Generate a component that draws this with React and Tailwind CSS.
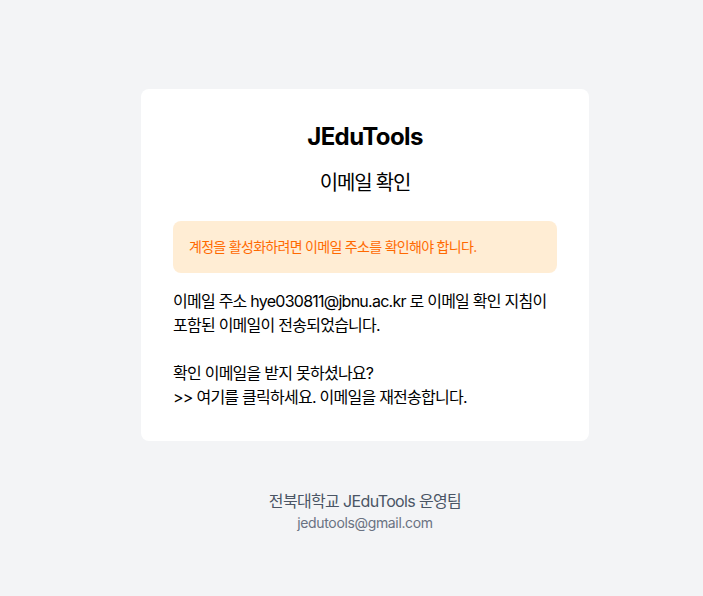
import React from "react";

function App() {
  return (
    <div
      className="min-h-screen bg-gray-100 pt-[89px] pl-[27px]"
      style={{ fontFamily: "Inter, 'Noto Sans CJK KR', sans-serif" }}
    >
      <div className="mx-auto w-[448px] bg-white rounded-lg p-8 break-keep">
        <h1 className="text-center text-2xl font-bold text-black tracking-tight">JEduTools</h1>
        <h2 className="text-center text-xl text-black mt-4 mb-6 tracking-[-0.06em]">이메일 확인</h2>
        <div className="bg-orange-100 text-orange-500 text-sm leading-5 rounded-lg p-4 tracking-tighter">
          계정을 활성화하려면 이메일 주소를 확인해야 합니다.
        </div>
        <div className="mt-4 text-base text-black tracking-[-0.047em]">
          <p>
            이메일 주소 hye030811@jbnu.ac.kr 로 이메일 확인 지침이 포함된 이메일이
            전송되었습니다.
          </p>
          <p className="mt-6">확인 이메일을 받지 못하셨나요?</p>
          <p>
            <a href="#">&gt;&gt; 여기를 클릭하세요. 이메일을 재전송합니다.</a>
          </p>
        </div>
      </div>
      <div className="mt-12 text-center">
        <p className="text-base text-gray-600 tracking-[-0.04em]">전북대학교 JEduTools 운영팀</p>
        <p className="text-sm text-gray-500 tracking-tight">jedutools@gmail.com</p>
      </div>
    </div>
  );
}

export default App;
